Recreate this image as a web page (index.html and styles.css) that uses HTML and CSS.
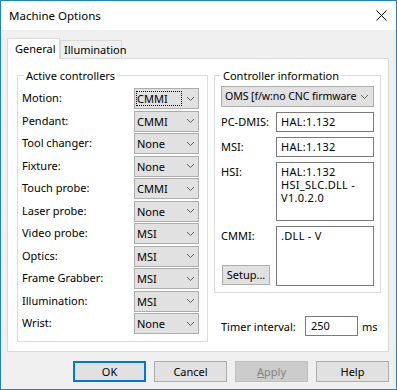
FILE: index.html
```html
<!DOCTYPE html>
<html>
<head>
<meta charset="utf-8">
<link rel="stylesheet" href="styles.css">
</head>
<body>
<div class="window">
  <div class="titlebar">
    <span class="title">Machine Options</span>
    <svg class="close" width="11" height="11" viewBox="0 0 11 11"><path d="M0.5 0.5 L10.5 10.5 M10.5 0.5 L0.5 10.5" stroke="#000" stroke-width="1" fill="none"/></svg>
  </div>
  <div class="body">
    <div class="tabs">
      <div class="tab active">General</div>
      <div class="tab inactive">Illumination</div>
    </div>
    <div class="panel">
      <fieldset class="group left">
        <legend>Active controllers</legend>
        <div class="rows">
          <span class="lbl">Motion:</span><div class="combo"><span class="val focus">CMMI</span><svg class="chev" width="7" height="4" viewBox="0 0 7 4"><path d="M0 0 L3.5 3.5 L7 0" stroke="#606060" fill="none"/></svg></div>
          <span class="lbl">Pendant:</span><div class="combo"><span class="val">CMMI</span><svg class="chev" width="7" height="4" viewBox="0 0 7 4"><path d="M0 0 L3.5 3.5 L7 0" stroke="#606060" fill="none"/></svg></div>
          <span class="lbl">Tool changer:</span><div class="combo"><span class="val">None</span><svg class="chev" width="7" height="4" viewBox="0 0 7 4"><path d="M0 0 L3.5 3.5 L7 0" stroke="#606060" fill="none"/></svg></div>
          <span class="lbl">Fixture:</span><div class="combo"><span class="val">None</span><svg class="chev" width="7" height="4" viewBox="0 0 7 4"><path d="M0 0 L3.5 3.5 L7 0" stroke="#606060" fill="none"/></svg></div>
          <span class="lbl">Touch probe:</span><div class="combo"><span class="val">CMMI</span><svg class="chev" width="7" height="4" viewBox="0 0 7 4"><path d="M0 0 L3.5 3.5 L7 0" stroke="#606060" fill="none"/></svg></div>
          <span class="lbl">Laser probe:</span><div class="combo"><span class="val">None</span><svg class="chev" width="7" height="4" viewBox="0 0 7 4"><path d="M0 0 L3.5 3.5 L7 0" stroke="#606060" fill="none"/></svg></div>
          <span class="lbl">Video probe:</span><div class="combo"><span class="val">MSI</span><svg class="chev" width="7" height="4" viewBox="0 0 7 4"><path d="M0 0 L3.5 3.5 L7 0" stroke="#606060" fill="none"/></svg></div>
          <span class="lbl">Optics:</span><div class="combo"><span class="val">MSI</span><svg class="chev" width="7" height="4" viewBox="0 0 7 4"><path d="M0 0 L3.5 3.5 L7 0" stroke="#606060" fill="none"/></svg></div>
          <span class="lbl">Frame Grabber:</span><div class="combo"><span class="val">MSI</span><svg class="chev" width="7" height="4" viewBox="0 0 7 4"><path d="M0 0 L3.5 3.5 L7 0" stroke="#606060" fill="none"/></svg></div>
          <span class="lbl">Illumination:</span><div class="combo"><span class="val">MSI</span><svg class="chev" width="7" height="4" viewBox="0 0 7 4"><path d="M0 0 L3.5 3.5 L7 0" stroke="#606060" fill="none"/></svg></div>
          <span class="lbl">Wrist:</span><div class="combo"><span class="val">None</span><svg class="chev" width="7" height="4" viewBox="0 0 7 4"><path d="M0 0 L3.5 3.5 L7 0" stroke="#606060" fill="none"/></svg></div>
        </div>
      </fieldset>
      <div class="rightcol">
        <fieldset class="group right">
          <legend>Controller information</legend>
          <div class="combo wide"><span class="val">OMS [f/w:no CNC firmware</span><svg class="chev" width="7" height="4" viewBox="0 0 7 4"><path d="M0 0 L3.5 3.5 L7 0" stroke="#606060" fill="none"/></svg></div>
          <div class="info">
            <span class="ilbl">PC-DMIS:</span><div class="textbox">HAL:1.132</div>
            <span class="ilbl">MSI:</span><div class="textbox">HAL:1.132</div>
            <span class="ilbl">HSI:</span><div class="textbox">HAL:1.132<br>HSI_SLC.DLL -<br>V1.0.2.0</div>
            <div class="ilbl cmmi"><span>CMMI:</span><div class="setup">Setup...</div></div><div class="textbox">.DLL - V</div>
          </div>
        </fieldset>
        <div class="timer">
          <span class="tlbl">Timer interval:</span>
          <div class="tbox">250</div>
          <span class="ms">ms</span>
        </div>
      </div>
    </div>
    <div class="buttons">
      <div class="btn default">OK</div>
      <div class="btn">Cancel</div>
      <div class="btn disabled"><u>A</u>pply</div>
      <div class="btn">Help</div>
    </div>
  </div>
</div>
</body>
</html>
```

FILE: styles.css
```css
* { box-sizing: border-box; }
html, body { margin: 0; padding: 0; }
body {
  font-family: "Noto Sans", "Open Sans", sans-serif;
  font-size: 11px;
  color: #000;
  background: #fff;
}
.window {
  width: 397px;
  height: 390px;
  border: 1px solid #1883d7;
  display: flex;
  flex-direction: column;
}
.titlebar {
  height: 29px;
  flex: none;
  background: #fff;
  display: flex;
  align-items: center;
  justify-content: space-between;
  padding: 0 9px 0 8px;
}
.title { line-height: 15px; font-size: 11.5px; }
.close { display: block; }
.body {
  flex: 1;
  background: #f0f0f0;
  padding: 8px 7px 0 6px;
  display: flex;
  flex-direction: column;
}
.tabs {
  display: flex;
  height: 21px;
  position: relative;
  z-index: 1;
  flex: none;
}
.tab {
  border: 1px solid #d9d9d9;
  border-bottom: none;
  white-space: nowrap;
}
.tab.active {
  background: #fff;
  height: 21px;
  width: 53px;
  padding-left: 7px;
  line-height: 19px;
}
.tab.inactive {
  margin-top: 2px;
  height: 18px;
  width: 62px;
  padding-left: 3px;
  line-height: 17px;
  background: #f0f0f0;
}
.panel {
  margin-top: -1px;
  height: 294px;
  flex: none;
  border: 1px solid #d9d9d9;
  background: #fff;
  display: flex;
  align-items: flex-start;
  padding: 0 7px 0 9px;
}
.group {
  margin: 0;
  border: 1px solid #dcdcdc;
  min-width: 0;
}
.group legend {
  padding: 0 2px;
  line-height: 15px;
  white-space: nowrap;
}
.group.left {
  width: 191px;
  margin-top: 9px;
  padding: 5px 8px 7px 4px;
}
.group.left legend { margin-left: 2px; }
.rows {
  display: grid;
  grid-template-columns: 112px 65px;
  grid-auto-rows: 21px;
  row-gap: 1.5px;
}
.lbl {
  align-self: center;
  line-height: 15px;
  white-space: nowrap;
  margin-top: -2px;
}
.combo {
  height: 21px;
  background: #e1e1e1;
  border: 1px solid #adadad;
  display: flex;
  align-items: center;
  justify-content: space-between;
  padding: 0 4px 0 2px;
  white-space: nowrap;
}
.combo .val { line-height: 15px; }
.combo .val.focus {
  border: 1px dotted #000;
  margin-left: -1px;
  width: 46px;
  height: 15px;
  line-height: 13px;
}
.chev { display: block; flex: none; }
.rightcol {
  margin-left: 6px;
  margin-top: 9px;
  width: 167px;
}
.group.right {
  width: 167px;
  padding: 3px 6px 6px 6px;
}
.combo.wide {
  width: 153px;
  padding: 0 5px 0 3px;
  overflow: hidden;
}
.combo.wide .val {
  font-size: 10.6px;
  letter-spacing: -0.1px;
}
.info {
  margin-top: 5px;
  display: grid;
  grid-template-columns: 55px 98px;
  grid-template-rows: 20px 20px 59px 60px;
  row-gap: 5px;
}
.ilbl {
  padding-top: 2px;
  line-height: 15px;
  white-space: nowrap;
}
.ilbl.cmmi {
  display: flex;
  flex-direction: column;
  justify-content: space-between;
  align-items: flex-start;
}
.setup {
  width: 48px;
  height: 20px;
  margin-left: 1px;
  margin-bottom: 1px;
  background: #e1e1e1;
  border: 1px solid #adadad;
  text-align: center;
  line-height: 17px;
}
.textbox {
  border: 1px solid #7a7a7a;
  background: #fff;
  padding: 2px 4px;
  line-height: 13px;
  white-space: nowrap;
  letter-spacing: 0.3px;
}
.timer {
  margin-top: 23px;
  margin-left: 7px;
  display: flex;
  align-items: center;
}
.tlbl { width: 84px; line-height: 15px; }
.tbox {
  width: 53px;
  height: 20px;
  border: 1px solid #7a7a7a;
  padding-left: 5px;
  line-height: 18px;
}
.ms { margin-left: 4px; line-height: 15px; }
.buttons {
  margin-top: 9px;
  display: flex;
  justify-content: flex-end;
  gap: 8px;
}
.btn {
  width: 73px;
  height: 21px;
  background: #e1e1e1;
  border: 1px solid #adadad;
  text-align: center;
  line-height: 19px;
}
.btn.default {
  border: 2px solid #0078d7;
  line-height: 17px;
}
.btn.disabled {
  background: #cccccc;
  border-color: #bfbfbf;
  color: #838383;
}
```
